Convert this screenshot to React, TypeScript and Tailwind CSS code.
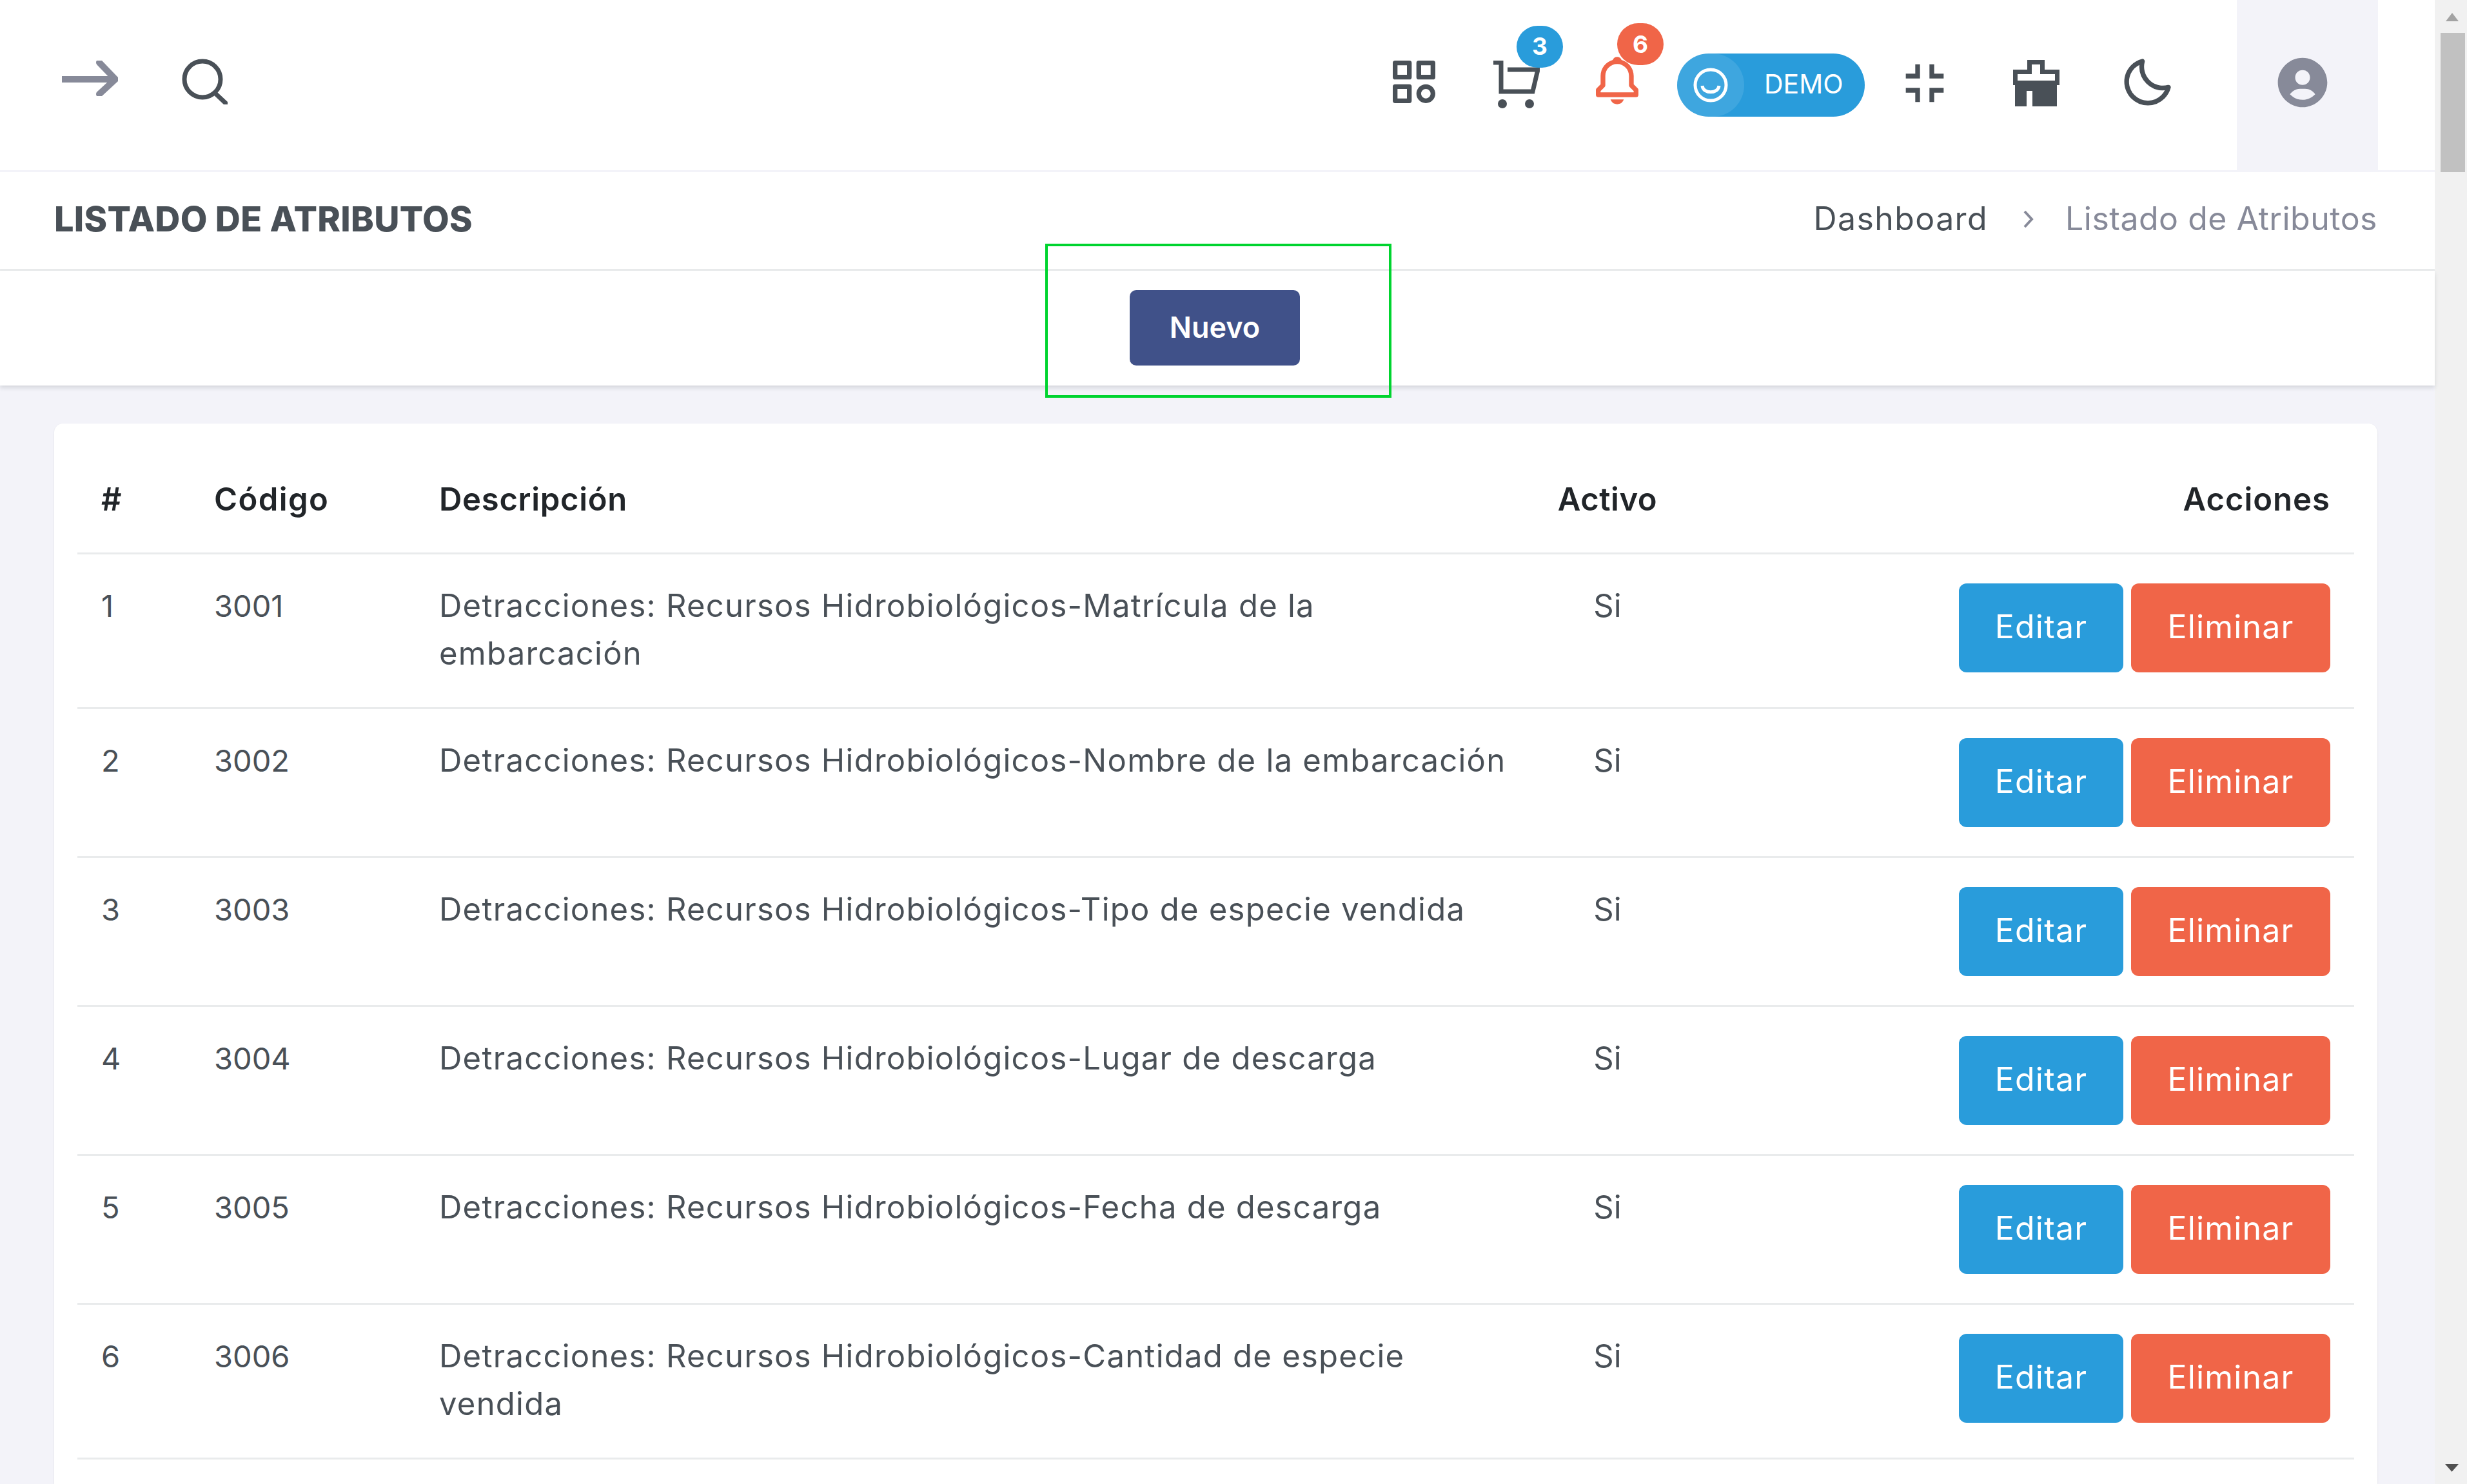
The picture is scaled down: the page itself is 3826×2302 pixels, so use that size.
import { BiBell, BiCategory, BiExitFullscreen, BiMoon, BiSolidUserCircle } from 'react-icons/bi';

const rows = [
  { id: 1, code: '3001', text: 'Detracciones: Recursos Hidrobiológicos-Matrícula de la embarcación' },
  { id: 2, code: '3002', text: 'Detracciones: Recursos Hidrobiológicos-Nombre de la embarcación' },
  { id: 3, code: '3003', text: 'Detracciones: Recursos Hidrobiológicos-Tipo de especie vendida' },
  { id: 4, code: '3004', text: 'Detracciones: Recursos Hidrobiológicos-Lugar de descarga' },
  { id: 5, code: '3005', text: 'Detracciones: Recursos Hidrobiológicos-Fecha de descarga' },
  { id: 6, code: '3006', text: 'Detracciones: Recursos Hidrobiológicos-Cantidad de especie vendida' },
];

function GiftIcon() {
  return (
    <svg width="72" height="72" viewBox="0 0 72 72">
      <path fillRule="evenodd" fill="#495057" d="M22 0H49V15H72V39H68V72H30V48H21V72H3V39H0V15H22ZM29 7V22H7V32H65V22H42V7Z" />
    </svg>
  );
}

function CartIcon() {
  return (
    <svg width="74" height="75" viewBox="0 0 74 75" fill="none" stroke="#495057" strokeWidth="7">
      <path d="M2 3H14V48H63L71 14H24" />
      <circle cx="16" cy="67" r="7" fill="#495057" stroke="none" />
      <circle cx="58" cy="67" r="7" fill="#495057" stroke="none" />
    </svg>
  );
}

export default function App() {
  return (
    <div className="flex h-[2302px] w-[3826px] overflow-hidden bg-[#f3f3f9] font-['Inter',sans-serif] text-[49px] text-[#495057]">
      <div className="flex w-[3776px] flex-col">
        {/* Topbar */}
        <div className="flex h-[267px] shrink-0 items-center justify-between border-b-[3px] border-[#f3f3f9] bg-white pr-[88px] pl-[96px]">
          <div className="flex items-center gap-[99px] pb-[22px]">
            <svg width="87" height="55" viewBox="0 0 87 55" fill="none" stroke="#878a99" strokeWidth="10">
              <path d="M0 29H80" />
              <path d="M58 3L83 29L58 52" strokeLinecap="round" />
            </svg>
            <svg width="71" height="71" viewBox="0 0 71 71" fill="none" stroke="#495057" strokeWidth="7" className="mt-[10px]">
              <circle cx="32" cy="32" r="28" />
              <path d="M52 54L69 70" strokeLinecap="round" />
            </svg>
          </div>
          <div className="flex h-full items-center">
            <button className="flex w-[158px] justify-center pb-[10px] text-[#495057]">
              <BiCategory size={88} />
            </button>
            <button className="relative flex w-[158px] justify-center pb-[2px]">
              <CartIcon />
              <span className="absolute -top-[54px] left-[80px] flex h-[65px] w-[72px] items-center justify-center rounded-full bg-[#299cdb] text-[37px] font-bold text-white">3</span>
            </button>
            <button className="relative flex w-[156px] justify-center pb-[14px] text-[#f06548]">
              <BiBell size={88} />
              <span className="absolute -top-[45px] left-[78px] flex h-[65px] w-[72px] items-center justify-center rounded-full bg-[#f06548] text-[37px] font-bold text-white">6</span>
            </button>
            <button className="ml-[15px] flex h-[98px] w-[291px] items-center rounded-full bg-[#299cdb] text-[41px] text-white">
              <span className="flex h-full w-[104px] items-center justify-center rounded-full bg-white/10">
                <svg width="56" height="56" viewBox="0 0 56 56" fill="none" stroke="white" strokeWidth="5">
                  <circle cx="28" cy="28" r="24" />
                  <path d="M15 29C16 42 40 42 41 29" />
                </svg>
              </span>
              <span className="ml-[31px] pb-[3px]">DEMO</span>
            </button>
            <button className="ml-[7px] flex w-[172px] justify-center pb-[6px] text-[#495057]">
              <BiExitFullscreen size={88} />
            </button>
            <button className="flex w-[173px] justify-center pb-[6px]">
              <GiftIcon />
            </button>
            <button className="flex w-[172px] justify-center pb-[9px] text-[#495057]">
              <BiMoon size={88} />
            </button>
            <div className="ml-[53px] flex h-full w-[219px] items-center justify-center bg-[#f3f3f9] pr-[16px] pb-[8px] text-[#878a99]">
              <BiSolidUserCircle size={92} />
            </div>
          </div>
        </div>

        {/* Page title */}
        <div className="flex h-[153px] shrink-0 items-center justify-between border-b-[3px] border-[#e9ebec] bg-white pr-[89px] pb-[5px] pl-[84px]">
          <h1 className="text-[54px] font-extrabold tracking-[0.3px] text-[#495057]">LISTADO DE ATRIBUTOS</h1>
          <div className="flex items-center text-[50px]">
            <span className="tracking-[1.4px]">Dashboard</span>
            <svg width="18" height="32" viewBox="0 0 18 32" fill="none" stroke="#878a99" strokeWidth="4" className="mr-[48px] ml-[54px]">
              <path d="M3 4L14 16L3 28" />
            </svg>
            <span className="tracking-[0.5px] text-[#878a99]">Listado de Atributos</span>
          </div>
        </div>

        {/* Toolbar */}
        <div className="relative flex h-[178px] shrink-0 items-center bg-white pb-[2px] pl-[1752px] shadow-[0_4px_6px_rgba(56,65,74,0.15)]">
          <button className="h-[117px] w-[264px] rounded-[10px] bg-[#405189] text-[45px] font-semibold text-white">Nuevo</button>
          <div className="absolute top-[-42px] left-[1621px] h-[239px] w-[537px] border-[4px] border-[#00d42f]" />
        </div>

        {/* Table card */}
        <div className="mt-[59px] mr-[89px] ml-[84px] flex-1 overflow-hidden rounded-t-[14px] bg-white px-[36px] pt-[36px] shadow-[0_1px_2px_rgba(56,65,74,0.15)]">
          <table className="w-full table-fixed border-collapse">
            <thead>
              <tr className="border-b-[3px] border-[#e9ebec] text-left text-[#212529]">
                <th className="w-[175px] px-[37px] pt-[45px] pb-[45px] leading-[74px] font-semibold">#</th>
                <th className="w-[349px] px-[37px] pt-[45px] pb-[45px] leading-[74px] font-semibold tracking-[1.4px]">Código</th>
                <th className="w-[1742px] px-[37px] pt-[45px] pb-[45px] leading-[74px] font-semibold tracking-[0.7px]">Descripción</th>
                <th className="w-[214px] pt-[45px] pb-[45px] text-center leading-[74px] font-semibold tracking-[0.5px]">Activo</th>
                <th className="px-[37px] pt-[45px] pb-[45px] text-right leading-[74px] font-semibold tracking-[1px]">Acciones</th>
              </tr>
            </thead>
            <tbody>
              {rows.map((r) => (
                <tr key={r.id} className="border-b-[3px] border-[#e9ebec] align-top">
                  <td className="px-[37px] pt-[43px] pb-[46px] text-[47px] leading-[74px]">{r.id}</td>
                  <td className="px-[37px] pt-[43px] pb-[46px] text-[47px] leading-[74px]">{r.code}</td>
                  <td className="px-[37px] pt-[43px] pb-[46px] leading-[74px] tracking-[1.25px]">{r.text}</td>
                  <td className="pt-[43px] pb-[46px] text-center leading-[74px]">Si</td>
                  <td className="px-[37px] py-[45px]">
                    <div className="flex justify-end gap-[12px] text-[50px] tracking-[1.2px] text-white">
                      <button className="h-[138px] w-[255px] rounded-[12px] bg-[#299cdb] pb-[4px]">Editar</button>
                      <button className="h-[138px] w-[309px] rounded-[12px] bg-[#f06548] pb-[4px]">Eliminar</button>
                    </div>
                  </td>
                </tr>
              ))}
            </tbody>
          </table>
        </div>
      </div>

      {/* Scrollbar */}
      <div className="flex w-[50px] shrink-0 flex-col bg-[#f1f1f1] pt-[20px]">
        <svg width="20" height="13" viewBox="0 0 20 13" className="ml-[17px]">
          <path d="M10 0L20 13H0Z" fill="#a3a3a3" />
        </svg>
        <div className="mt-[18px] ml-[9px] h-[216px] w-[38px] bg-[#c1c1c1]" />
        <svg width="21" height="12" viewBox="0 0 21 12" className="mt-auto mb-[19px] ml-[16px]">
          <path d="M0 0H21L10.5 12Z" fill="#505050" />
        </svg>
      </div>
    </div>
  );
}
